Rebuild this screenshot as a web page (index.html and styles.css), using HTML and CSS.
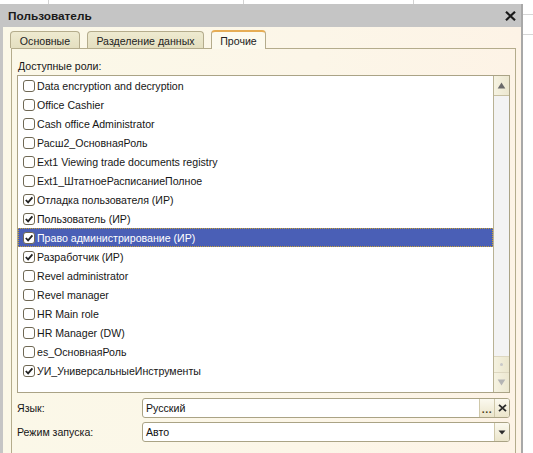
FILE: index.html
```html
<!DOCTYPE html>
<html lang="ru">
<head>
<meta charset="utf-8">
<title>Пользователь</title>
<link rel="stylesheet" href="styles.css">
</head>
<body>
<div class="desk">
  <div class="dialog">
    <div class="titlebar">
      <span class="title">Пользователь</span>
      <svg class="close" width="11" height="10" viewBox="0 0 11 10"><path d="M1 0.8 L10 9.2 M10 0.8 L1 9.2" stroke="#1a1a1a" stroke-width="2.2" fill="none"/></svg>
    </div>
    <div class="client">
      <div class="tabs">
        <div class="tab t1">Основные</div>
        <div class="tab t2">Разделение данных</div>
        <div class="tab t3 active">Прочие</div>
      </div>
      <div class="panel">
        <div class="caption">Доступные роли:</div>
        <div class="list">
          <div class="rows">
            <div class="row"><span class="cb"></span>Data encryption and decryption</div>
            <div class="row"><span class="cb"></span>Office Cashier</div>
            <div class="row"><span class="cb"></span>Cash office Administrator</div>
            <div class="row"><span class="cb"></span>Расш2_ОсновнаяРоль</div>
            <div class="row"><span class="cb"></span>Ext1 Viewing trade documents registry</div>
            <div class="row"><span class="cb"></span>Ext1_ШтатноеРасписаниеПолное</div>
            <div class="row"><span class="cb"><svg viewBox="0 0 10 10" width="10" height="10"><path d="M1.8 5 L4.1 7.4 L8.4 2.4" fill="none" stroke="#222" stroke-width="1.8"/></svg></span>Отладка пользователя (ИР)</div>
            <div class="row"><span class="cb"><svg viewBox="0 0 10 10" width="10" height="10"><path d="M1.8 5 L4.1 7.4 L8.4 2.4" fill="none" stroke="#222" stroke-width="1.8"/></svg></span>Пользователь (ИР)</div>
            <div class="row sel"><span class="cb"><svg viewBox="0 0 10 10" width="10" height="10"><path d="M1.8 5 L4.1 7.4 L8.4 2.4" fill="none" stroke="#222" stroke-width="1.8"/></svg></span>Право администрирование (ИР)</div>
            <div class="row"><span class="cb"><svg viewBox="0 0 10 10" width="10" height="10"><path d="M1.8 5 L4.1 7.4 L8.4 2.4" fill="none" stroke="#222" stroke-width="1.8"/></svg></span>Разработчик (ИР)</div>
            <div class="row"><span class="cb"></span>Revel administrator</div>
            <div class="row"><span class="cb"></span>Revel manager</div>
            <div class="row"><span class="cb"></span>HR Main role</div>
            <div class="row"><span class="cb"></span>HR Manager (DW)</div>
            <div class="row"><span class="cb"></span>es_ОсновнаяРоль</div>
            <div class="row"><span class="cb"><svg viewBox="0 0 10 10" width="10" height="10"><path d="M1.8 5 L4.1 7.4 L8.4 2.4" fill="none" stroke="#222" stroke-width="1.8"/></svg></span>УИ_УниверсальныеИнструменты</div>
          </div>
          <div class="scrollbar">
            <div class="sb-btn up"><svg width="9" height="7" viewBox="0 0 9 7"><path d="M4.5 0.5 L8.3 6.5 L0.7 6.5 Z" fill="#6a6a6a"/></svg></div>
            <div class="track"></div>
            <div class="thumb"><span class="dot"></span></div>
            <div class="sb-btn down"><svg width="9" height="7" viewBox="0 0 9 7"><path d="M0.7 0.5 L8.3 0.5 L4.5 6.5 Z" fill="#b4b4b4"/></svg></div>
          </div>
        </div>
        <div class="fields">
          <div class="label">Язык:</div>
          <div class="field">
            <span class="val">Русский</span>
            <span class="btn dots">...</span>
            <span class="btn"><svg width="9" height="8" viewBox="0 0 9 8"><path d="M1 0.8 L8 7.2 M8 0.8 L1 7.2" stroke="#2b2b2b" stroke-width="1.8" fill="none"/></svg></span>
          </div>
          <div class="label">Режим запуска:</div>
          <div class="field">
            <span class="val">Авто</span>
            <span class="btn"><svg width="8" height="5" viewBox="0 0 8 5"><path d="M0.5 0.5 L7.5 0.5 L4 4.5 Z" fill="#2b2b2b"/></svg></span>
          </div>
        </div>
      </div>
    </div>
  </div>
</div>
</body>
</html>
```
FILE: styles.css
```css
* { box-sizing: border-box; }
html, body { margin: 0; padding: 0; }
body {
  width: 533px;
  height: 453px;
  overflow: hidden;
  background-color: #fff;
  background-image:
    linear-gradient(#d2d2d2, #d2d2d2),
    linear-gradient(#d2d2d2, #d2d2d2),
    linear-gradient(#d2d2d2, #d2d2d2),
    linear-gradient(#d6d6d6, #d6d6d6),
    linear-gradient(#d6d6d6, #d6d6d6);
  background-repeat: no-repeat;
  background-size: 1px 4px, 1px 4px, 1px 4px, 10px 1px, 10px 1px;
  background-position: 48px 0, 243px 0, 413px 0, 523px 14px, 523px 34px;
  font-family: "Liberation Sans", Arial, sans-serif;
  font-size: 10.6px;
  color: #161616;
}
.desk { padding-top: 4px; }
.dialog {
  width: 523px;
  height: 449px;
  background: #c5c5c5;
  border-right: 2px solid #a8a8a8;
  display: flex;
  flex-direction: column;
}
.titlebar {
  height: 23px;
  flex: none;
  display: flex;
  align-items: center;
  justify-content: space-between;
  padding: 0 5px 0 8px;
}
.title { font-weight: bold; font-size: 11.8px; color: #1a1a1a; }
.close { display: block; margin-top: 1px; }
.client {
  flex: 1;
  margin-left: 3px;
  background: linear-gradient(to right, #fbf8e8, #fcf6e8 60%, #fdf3e6);
  display: flex;
  flex-direction: column;
}
.tabs {
  height: 21px;
  flex: none;
  display: flex;
  align-items: flex-end;
  gap: 7px;
  padding-left: 7px;
  position: relative;
  z-index: 1;
}
.tab {
  height: 17px;
  border: 1px solid #b4ac8c;
  border-bottom: none;
  border-radius: 4px 4px 0 0;
  background: linear-gradient(#eeead0, #e4dfc0);
  display: flex;
  align-items: center;
  justify-content: center;
  padding-top: 1px;
  color: #222;
}
.t1 { width: 70px; }
.t2 { width: 117px; }
.t3 { width: 55px; }
.tab.active {
  height: 19px;
  margin-bottom: -1px;
  background: #fcfaee;
  border-top: 2px solid #e6ad55;
  padding-top: 0;
}
.panel {
  flex: 1;
  width: 505px;
  margin-left: 8px;
  border: 1px solid #b4ac8c;
  border-bottom: none;
  padding: 11px 5px 0 5px;
}
.caption { height: 13px; line-height: 13px; padding-left: 1px; margin-bottom: 2px; }
.list {
  width: 493px;
  height: 318px;
  border: 1px solid #aaa386;
  background: #fff;
  display: flex;
}
.rows { flex: 1; }
.row {
  height: 19px;
  display: flex;
  align-items: center;
  padding-left: 5px;
  white-space: nowrap;
}
.row.sel {
  background: #4a5fb6;
  color: #fff;
  outline: 1px dotted #c9a236;
  outline-offset: -1px;
}
.cb {
  width: 12px;
  height: 12px;
  flex: none;
  border: 1px solid #6f6854;
  border-radius: 3px;
  background: #fff;
  margin-right: 2px;
  display: flex;
  align-items: center;
  justify-content: center;
}
.cb svg { display: block; }
.scrollbar {
  width: 16px;
  flex: none;
  border-left: 1px solid #b9b294;
  background: #f3f3f3;
  display: flex;
  flex-direction: column;
}
.sb-btn {
  height: 20px;
  flex: none;
  background: linear-gradient(to right, #f6f3e2, #ece7d0);
  display: flex;
  align-items: center;
  justify-content: center;
}
.sb-btn.up { border-bottom: 1px solid #c7c0a2; }
.sb-btn.down { border-top: 1px solid #ddd7c0; }
.track { flex: 1; }
.thumb {
  height: 16px;
  flex: none;
  background: linear-gradient(to right, #f5f2e0, #ebe6cd);
  border-top: 1px solid #ddd7c0;
  display: flex;
  align-items: center;
  justify-content: center;
}
.dot { width: 3px; height: 3px; border-radius: 50%; background: #c9c9c9; }
.fields {
  display: grid;
  grid-template-columns: 125px 368px;
  row-gap: 4px;
  margin-top: 5px;
  align-items: center;
}
.label { padding-left: 0; }
.field {
  height: 20px;
  border: 1px solid #aaa385;
  border-radius: 3px;
  background: #fff;
  display: flex;
  overflow: hidden;
}
.val { flex: 1; padding-left: 3px; line-height: 18px; color: #111; }
.btn {
  width: 15px;
  flex: none;
  border-left: 1px solid #cfc8aa;
  background: linear-gradient(#fbf9ef, #ebe5cb);
  display: flex;
  align-items: center;
  justify-content: center;
}
.btn.dots {
  align-items: flex-end;
  font-weight: bold;
  color: #4e4222;
  line-height: 14px;
  letter-spacing: 0.5px;
  padding-bottom: 1px;
}
```
